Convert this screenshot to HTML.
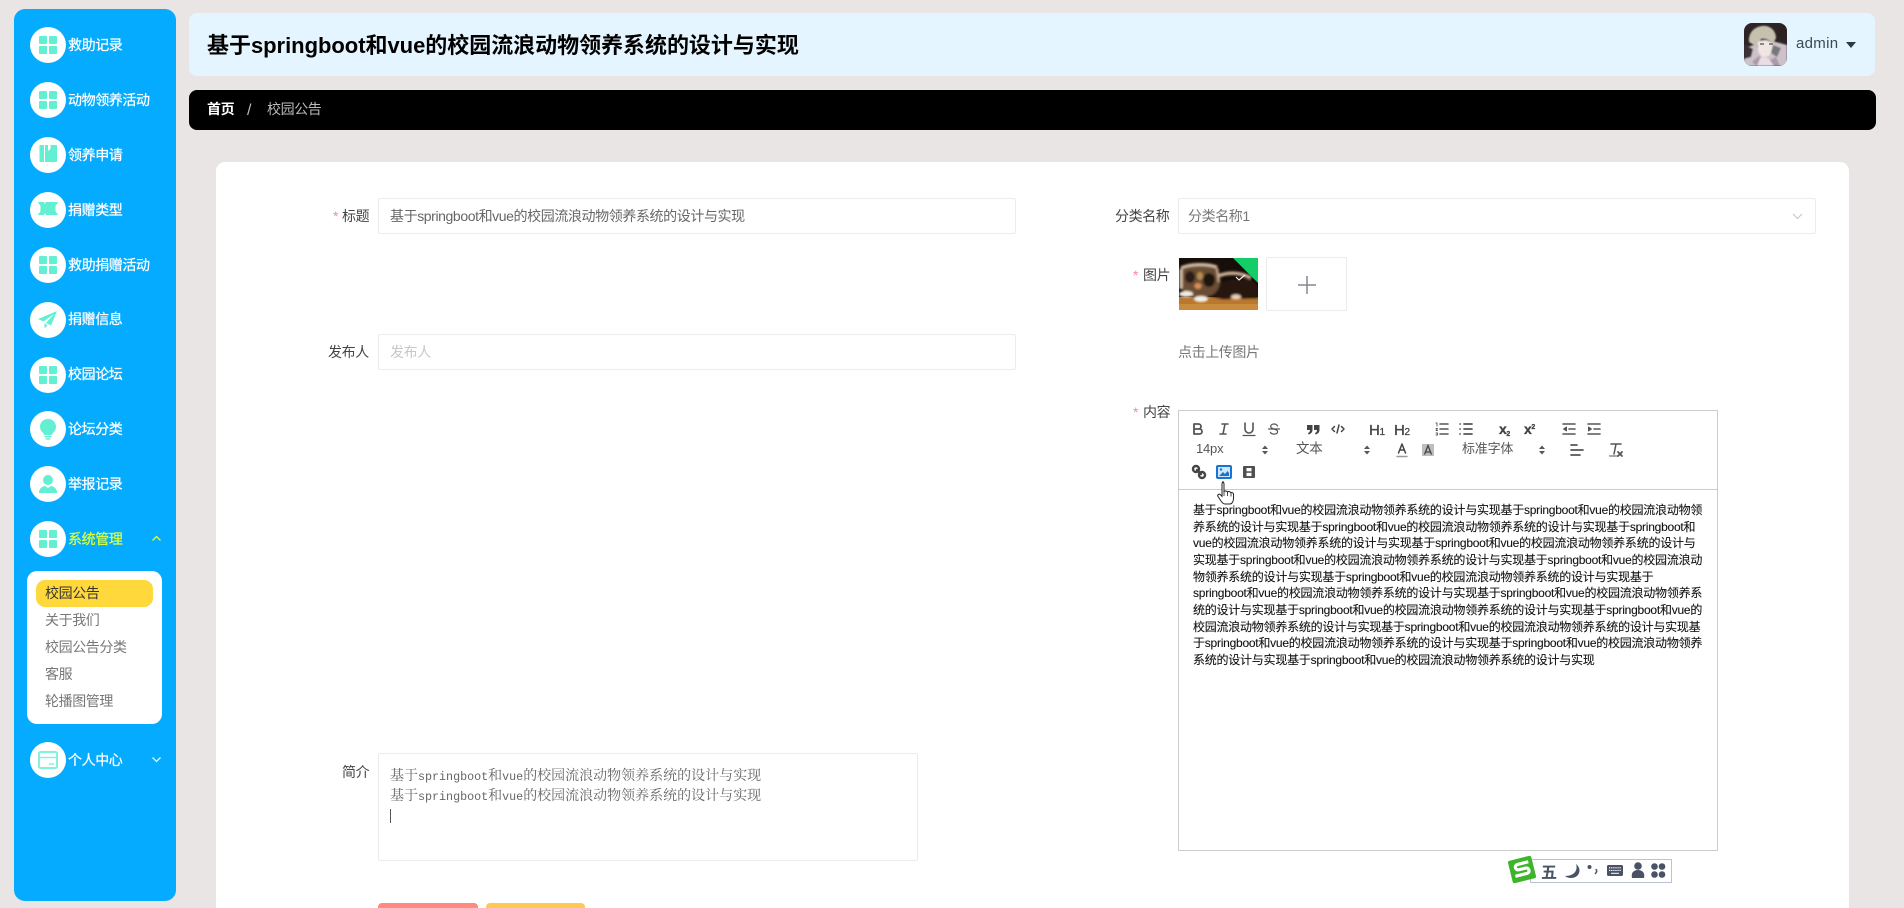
<!DOCTYPE html>
<html lang="zh">
<head>
<meta charset="utf-8">
<title>校园公告</title>
<style>
html,body{margin:0;padding:0;width:1904px;height:908px;overflow:hidden;background:#e9e5e5;}
body{position:relative;font-family:"Liberation Sans","Noto Sans CJK SC",sans-serif;font-size:14px;letter-spacing:-.4px;color:#333;}
div{box-sizing:border-box;}
.a{position:absolute;}
.t{position:absolute;white-space:nowrap;line-height:20px;}
.side{left:14px;top:9px;width:162px;height:892px;background:#05abff;border-radius:11px;}
.c{position:absolute;left:30px;width:36px;height:36px;border-radius:50%;background:#fff;}
.m{left:68px;color:#fff;-webkit-text-stroke:.25px currentColor;}
.sub{left:45px;color:#777;}
.lb{color:#444;text-align:right;}
.st{color:#f78a9a;}
.inp{position:absolute;border:1px solid #ececec;background:#fff;border-radius:2px;}
.ser{color:#666;font-family:'Noto Serif CJK SC','Liberation Mono',serif;letter-spacing:0;}
.ser span{font-family:'Liberation Mono',monospace;font-size:11.7px;letter-spacing:0;}
</style>
</head>
<body>
<!-- sidebar -->
<div class="a side"></div>
<div class="c" style="top:27px"></div>
<div class="c" style="top:82px"></div>
<div class="c" style="top:137px"></div>
<div class="c" style="top:192px"></div>
<div class="c" style="top:247px"></div>
<div class="c" style="top:302px"></div>
<div class="c" style="top:357px"></div>
<div class="c" style="top:411px"></div>
<div class="c" style="top:466px"></div>
<div class="c" style="top:521px"></div>
<div class="c" style="top:742px"></div>
<div class="t m" style="top:35px">救助记录</div>
<div class="t m" style="top:90px">动物领养活动</div>
<div class="t m" style="top:145px">领养申请</div>
<div class="t m" style="top:200px">捐赠类型</div>
<div class="t m" style="top:255px">救助捐赠活动</div>
<div class="t m" style="top:309px">捐赠信息</div>
<div class="t m" style="top:364px">校园论坛</div>
<div class="t m" style="top:419px">论坛分类</div>
<div class="t m" style="top:474px">举报记录</div>
<div class="t m" style="top:529px;color:#dcff3c">系统管理</div>
<div class="t m" style="top:750px">个人中心</div>
<div class="a" style="left:27px;top:571px;width:135px;height:153px;background:#fff;border-radius:10px"></div>
<div class="a" style="left:36px;top:580px;width:117px;height:27px;background:#ffd93b;border-radius:9px"></div>
<div class="t sub" style="top:583px;color:#333">校园公告</div>
<div class="t sub" style="top:610px">关于我们</div>
<div class="t sub" style="top:637px">校园公告分类</div>
<div class="t sub" style="top:664px">客服</div>
<div class="t sub" style="top:691px">轮播图管理</div>

<!-- header -->
<div class="a" style="left:189px;top:13px;width:1686px;height:63px;background:#e5f5ff;border-radius:8px"></div>
<div class="t" style="left:207px;top:31px;font-size:22px;line-height:30px;font-weight:bold;color:#000;letter-spacing:-.03px">基于springboot和vue的校园流浪动物领养系统的设计与实现</div>
<div class="t" style="left:1796px;top:34px;color:#3b4a57;font-size:15px;letter-spacing:.3px">admin</div>

<!-- breadcrumb -->
<div class="a" style="left:189px;top:90px;width:1687px;height:40px;background:#000;border-radius:8px"></div>
<div class="t" style="left:207px;top:99px;color:#fff;font-weight:bold">首页</div>
<div class="t" style="left:247px;top:101px;color:#bbb;font-size:16px">/</div>
<div class="t" style="left:267px;top:99px;color:#bbb">校园公告</div>

<!-- card -->
<div class="a" style="left:216px;top:162px;width:1633px;height:760px;background:#fff;border-radius:9px"></div>

<div class="t" style="left:333px;top:206px"><span class="st">*</span></div>
<div class="t lb" style="left:342px;top:206px">标题</div>
<div class="inp" style="left:378px;top:198px;width:638px;height:36px"></div>
<div class="t" style="left:390px;top:206px;color:#666">基于springboot和vue的校园流浪动物领养系统的设计与实现</div>

<div class="t lb" style="left:328px;top:342px">发布人</div>
<div class="inp" style="left:378px;top:334px;width:638px;height:36px"></div>
<div class="t" style="left:390px;top:342px;color:#c8c8c8">发布人</div>

<div class="t lb" style="left:342px;top:762px">简介</div>
<div class="inp" style="left:378px;top:753px;width:540px;height:108px"></div>
<div class="t ser" style="left:390px;top:765px">基于<span>springboot</span>和<span>vue</span>的校园流浪动物领养系统的设计与实现</div>
<div class="t ser" style="left:390px;top:785px">基于<span>springboot</span>和<span>vue</span>的校园流浪动物领养系统的设计与实现</div>
<div class="a" style="left:390px;top:809px;width:1px;height:14px;background:#555"></div>

<div class="a" style="left:378px;top:903px;width:100px;height:20px;background:#ff8a80;border-radius:4px"></div>
<div class="a" style="left:486px;top:903px;width:99px;height:20px;background:#fdcb52;border-radius:4px"></div>

<!-- right col -->
<div class="t lb" style="left:1115px;top:206px">分类名称</div>
<div class="inp" style="left:1178px;top:198px;width:638px;height:36px"></div>
<div class="t" style="left:1188px;top:206px;color:#777">分类名称1</div>

<div class="t" style="left:1133px;top:265px"><span class="st">*</span></div>
<div class="t lb" style="left:1143px;top:265px">图片</div>
<div class="inp" style="left:1266px;top:257px;width:81px;height:54px"></div>
<div class="t" style="left:1178px;top:342px;color:#777">点击上传图片</div>

<div class="t" style="left:1133px;top:402px"><span class="st">*</span></div>
<div class="t lb" style="left:1143px;top:402px">内容</div>
<div class="a" style="left:1178px;top:410px;width:540px;height:441px;border:1px solid #ccc;background:#fff"></div>
<div class="a" style="left:1179px;top:489px;width:538px;height:1px;background:#ccc"></div>

<div class="t" style="left:1196px;top:439px;font-size:13px;color:#555;letter-spacing:-.2px">14px</div>
<div class="t" style="left:1296px;top:439px;font-size:13.500px;color:#555;letter-spacing:-.2px">文本</div>
<div class="t" style="left:1462px;top:439px;font-size:13px;color:#555;letter-spacing:-.2px">标准字体</div>

<div class="a" style="left:1193px;top:502px;font-size:12px;line-height:16.67px;color:#111;white-space:nowrap;letter-spacing:-.24px;-webkit-text-stroke:.1px #111">基于springboot和vue的校园流浪动物领养系统的设计与实现基于springboot和vue的校园流浪动物领<br>养系统的设计与实现基于springboot和vue的校园流浪动物领养系统的设计与实现基于springboot和<br>vue的校园流浪动物领养系统的设计与实现基于springboot和vue的校园流浪动物领养系统的设计与<br>实现基于springboot和vue的校园流浪动物领养系统的设计与实现基于springboot和vue的校园流浪动<br>物领养系统的设计与实现基于springboot和vue的校园流浪动物领养系统的设计与实现基于<br>springboot和vue的校园流浪动物领养系统的设计与实现基于springboot和vue的校园流浪动物领养系<br>统的设计与实现基于springboot和vue的校园流浪动物领养系统的设计与实现基于springboot和vue的<br>校园流浪动物领养系统的设计与实现基于springboot和vue的校园流浪动物领养系统的设计与实现基<br>于springboot和vue的校园流浪动物领养系统的设计与实现基于springboot和vue的校园流浪动物领养<br>系统的设计与实现基于springboot和vue的校园流浪动物领养系统的设计与实现</div>

<!-- icon overlay -->
<svg class="a" style="left:0;top:0" width="1904" height="908" viewBox="0 0 1904 908" xmlns="http://www.w3.org/2000/svg">
<defs>
<g id="grid" fill="#62efd2"><rect x="-9" y="-9" width="8" height="8" rx="1"/><rect x="1" y="-9" width="8" height="8" rx="1"/><rect x="-9" y="1" width="8" height="8" rx="1"/><rect x="1" y="1" width="8" height="8" rx="1"/></g>
<g id="ud" fill="#555"><path d="M-3-1 0-4.500 3-1Z"/><path d="M-3 1 0 4.500 3 1Z"/></g>
<filter id="b1"><feGaussianBlur stdDeviation=".8"/></filter>
<filter id="b2"><feGaussianBlur stdDeviation="1.100"/></filter>
<clipPath id="catc"><rect x="1179" y="258" width="79" height="52"/></clipPath>
<clipPath id="avc"><rect x="1744" y="23" width="43" height="43" rx="8"/></clipPath>
</defs>
<use href="#grid" x="48" y="45"/>
<use href="#grid" x="48" y="100"/>
<use href="#grid" x="48" y="265"/>
<use href="#grid" x="48" y="375"/>
<use href="#grid" x="48" y="539"/>
<!-- book -->
<path d="M39.500 145h4.500v17h-4.500zM45 145h3v6l2.500-2v-4H57v17H45z" fill="#62efd2"/>
<!-- ticket -->
<path d="M38 202h6l1 2 1-2h12c-.5 2-2.500 2.500-2.500 4.500v4c0 2 2 2.500 2.500 4.500H46l-1-2-1 2h-6c.5-2 2.500-2.500 2.500-4.500v-4C40.500 204.500 38.500 204 38 202z" fill="#62efd2"/>
<!-- plane -->
<path d="M57 311 38 319l5.500 2.500L54 314l-8 9 5 2.500zM44.500 323v5.500l3-3z" fill="#62efd2"/>
<!-- bulb -->
<path d="M48 419c-4.700 0-8 3.500-8 7.800 0 3.200 2 5.200 3.500 6.600.6.600.7 1.100.7 1.600h7.600c0-.5.100-1 .7-1.600 1.500-1.400 3.500-3.400 3.500-6.600 0-4.300-3.300-7.800-8-7.800z" fill="#62efd2"/><rect x="44.500" y="436" width="7" height="1.500" rx=".7" fill="#62efd2"/><rect x="45.500" y="438.300" width="5" height="1.300" rx=".6" fill="#62efd2"/>
<!-- person -->
<circle cx="48" cy="480" r="5" fill="#62efd2"/><path d="M39 493c0-4 2.500-6.500 6-7l3 2 3-2c3.500.5 6 3 6 7z" fill="#62efd2"/>
<!-- card -->
<rect x="39" y="752" width="18" height="16" rx="1.500" fill="none" stroke="#82f2dc" stroke-width="2"/><path d="M39 757.500h18" stroke="#82f2dc" stroke-width="1.500"/><path d="M49 764h5" stroke="#82f2dc" stroke-width="1.500"/>
<!-- chevrons -->
<path d="M152.500 540.500 156.500 536.500 160.500 540.500" fill="none" stroke="#dcff3c" stroke-width="1.300"/>
<path d="M152.500 757.500 156.500 761.500 160.500 757.500" fill="none" stroke="#dff" stroke-width="1.300"/>

<!-- header avatar -->
<g clip-path="url(#avc)">
<rect x="1744" y="23" width="43" height="43" fill="#2e2425"/>
<g filter="url(#b1)">
<path d="M1744 48l10-3 10 6 8-10 15 4v21h-43z" fill="#cdc2cb"/>
<path d="M1749 42c-1-12 9-17 17-16 6 1 10 6 10 12l-3 6c-3-4-8-6-12-5l-4 8z" fill="#c5c1ae"/>
<path d="M1758 42c4-3 11-3 15 2l-2 9c-2 4-7 5-10 3-3-3-4-9-3-14z" fill="#efe5e2"/>
<path d="M1773 45l8 3-4 9-6-4z" fill="#77767b"/>
<path d="M1761 57l7 1 6 8h-18z" fill="#eaddE3"/>
<path d="M1744 44l9 5-2 8-7 2z" fill="#3a3034"/>
<path d="M1777 25h10v14l-7 3z" fill="#2a2021"/>
<path d="M1752 62c3-3 6-6 9-6l-4 10zM1770 60l6-3 4 9h-6z" fill="#a99aa5"/>
</g>
<path d="M1760 44h4M1769 44h4" stroke="#5c6b69" stroke-width="1.500"/>
</g>
<path d="M1846 42h10l-5 6z" fill="#2b3a45"/>

<!-- select chevron -->
<path d="M1793 214 1797.500 218.500 1802 214" fill="none" stroke="#c0c4cc" stroke-width="1"/>

<!-- kitten -->
<g clip-path="url(#catc)">
<rect x="1179" y="258" width="79" height="52" fill="#170d09"/>
<rect x="1179" y="297" width="79" height="13" fill="#b9772f"/>
<rect x="1179" y="304" width="79" height="6" fill="#c98c3e"/>
<g filter="url(#b2)">
<path d="M1210 296c4-12 18-18 32-17 10 1 16 4 16 10v9l-35 1z" fill="#26130b"/>
<path d="M1181 268c9-5 27-5 36-1l3 11c1 11-5 18-17 20-12 1-21-4-22-15z" fill="#6a4e36"/>
<path d="M1181 268c8-4 25-5 36-1" fill="none" stroke="#d6bfa6" stroke-width="3"/>
<path d="M1181 269v20" stroke="#d8c3ab" stroke-width="3"/>
<path d="M1217 268l2 14" stroke="#bfa48a" stroke-width="2.500"/>
<path d="M1218 276c10-4 22-4 33 2" fill="none" stroke="#cdaf94" stroke-width="3.500"/>
<ellipse cx="1190" cy="277" rx="5" ry="6" fill="#2a1d15"/>
<ellipse cx="1209" cy="280" rx="6" ry="7" fill="#1d120c"/>
<ellipse cx="1200" cy="276" rx="3" ry="4" fill="#b98c50"/>
<ellipse cx="1198" cy="286" rx="3.500" ry="3" fill="#d98f58"/>
<ellipse cx="1186" cy="294" rx="7" ry="3" fill="#f4ecdc"/>
<ellipse cx="1201" cy="299" rx="7" ry="3" fill="#f8f1e6"/>
<ellipse cx="1236" cy="297" rx="5" ry="2.500" fill="#e7d2ba"/>
</g>
<path d="M1233 258h25v25z" fill="#13ce66"/>
<path d="M1236 277l3 3 6-5" fill="none" stroke="#f2f2f2" stroke-width="1.200"/>
</g>
<!-- plus -->
<path d="M1298 285h18M1307 276v18" stroke="#84888e" stroke-width="1.500"/>

<!-- toolbar row 1 -->
<g fill="none" stroke="#555" stroke-width="1.800" stroke-linecap="round" stroke-linejoin="round">
<g transform="translate(1189 420)"><path d="M5 4h4.500a2.500 2.500 0 0 1 0 5H5zM5 9h5.500a2.500 2.500 0 0 1 0 5H5z"/></g>
<g transform="translate(1215 420)" stroke-width="1.600"><path d="M7 4h6M5 14h6M10 4 8 14"/></g>
<g transform="translate(1240 420)" stroke-width="1.600"><path d="M5 3v6a4 4 0 0 0 8 0V3"/><path d="M3 15.500h12" stroke-width="1.200"/></g>
<g transform="translate(1265 420)" stroke-width="1.200"><path d="M12.500 6C12 4.800 10.500 4 9 4c-2 0-3.300 1-3.300 2.400 0 1.200 1 2 3.300 2.600 2.700.7 3.600 1.600 3.600 2.800 0 1.400-1.500 2.300-3.600 2.300-1.600 0-3-.6-3.600-1.800"/><path d="M3.500 9h11"/></g>
<g transform="translate(1304 420)" stroke="none" fill="#444"><path d="M3 5h5.500v5c0 2-1.500 4-4 4.500L4 13c1.500-.5 2-1.500 2-3H3zM10 5h5.500v5c0 2-1.500 4-4 4.500L11 13c1.500-.5 2-1.500 2-3h-3z"/></g>
<g transform="translate(1329 420)" stroke-width="1.500" stroke="#444"><path d="M5.500 6.500 3 9l2.500 2.500M12.500 6.500 15 9l-2.500 2.500M10 5 8 13"/></g>
<g transform="translate(1433 420)" stroke-width="1.500"><path d="M7 4h8M7 9h8M7 14h8"/><path d="M3 3h1v3M3 8.500h1.500L3 10.500h1.500M3 13h1.500v2H3" stroke-width=".9"/></g>
<g transform="translate(1457 420)" stroke-width="1.700"><path d="M7 4h8M7 9h8M7 14h8"/><path d="M3 4h.1M3 9h.1M3 14h.1"/></g>
<g transform="translate(1560 420)" stroke-width="1.600"><path d="M3 4h12M9 9h6M3 14h12"/><path d="M6.500 7 3.500 9l3 2z" fill="#555" stroke-width="1"/></g>
<g transform="translate(1585 420)" stroke-width="1.600"><path d="M3 4h12M9 9h6M3 14h12"/><path d="M3.500 7l3 2-3 2z" fill="#555" stroke-width="1"/></g>
<!-- row 2 -->
<g transform="translate(1393 441)" stroke-width="1.500" stroke="#444"><path d="M5.500 12 9 3l3.500 9M6.700 9h4.600"/><path d="M4 15.500h10" stroke="#9a9a9a" stroke-width="1.400"/></g>
<g transform="translate(1568 441)" stroke-width="1.700"><path d="M3 4h6M3 9h12M3 14h9"/></g>
<g transform="translate(1606 440)" stroke-width="1.500"><path d="M5 4h10M10 4 8 14"/><path d="M3.500 16h8" stroke-width="1"/><path d="M12 12l4 4M16 12l-4 4" stroke-width="1.800"/></g>
<!-- row 3 link -->
<g transform="translate(1190 463)" stroke-width="2.400" stroke="#444"><path d="M7 7l4 4"/><circle cx="6" cy="6" r="3"/><circle cx="12" cy="12" r="3"/></g>
</g>
<g fill="#444" stroke="#444" stroke-width=".3" font-family="Liberation Sans, sans-serif">
<text x="1369" y="435" font-size="15">H<tspan font-size="10">1</tspan></text>
<text x="1394" y="435" font-size="15">H<tspan font-size="10">2</tspan></text>
<text x="1499" y="434" font-size="14" font-weight="bold">x<tspan font-size="7" dy="2">2</tspan></text>
<text x="1524" y="434" font-size="14" font-weight="bold">x<tspan font-size="7" dy="-5">2</tspan></text>
</g>
<!-- film -->
<rect x="1243" y="466" width="12" height="12" rx="1" fill="#505050"/>
<rect x="1246.500" y="468" width="5" height="3.300" fill="#fff"/>
<rect x="1246.500" y="472.800" width="5" height="3.300" fill="#fff"/>
<use href="#ud" x="1265" y="450"/>
<use href="#ud" x="1367" y="450"/>
<use href="#ud" x="1542" y="450"/>
<!-- A background -->
<rect x="1422" y="444" width="12" height="12" fill="#bdbdbd"/>
<path d="M1424.500 454.500 1428 445.500l3.500 9M1425.800 452h4.400" fill="none" stroke="#444" stroke-width="1.300"/>
<!-- image icon (active) -->
<g transform="translate(1215 463)">
<rect x="2" y="3" width="14" height="12" rx="1" fill="#cfe6fa" stroke="#1a73cc" stroke-width="2"/>
<path d="M4 13l4-4 2 2 2.500-3L14 10v3z" fill="#1a73cc"/>
<circle cx="6" cy="6.500" r="1.200" fill="#1a73cc"/>
</g>
<!-- hand cursor -->
<path d="M1222 482c1.300 0 2 .8 2 2v7.500c.8-.7 3-.8 3.500.5.800-.8 3-.6 3.400.8 1-.6 2.600 0 2.600 1.500v4c0 3-1.500 5.700-3.500 5.700h-5c-2 0-3-1.500-4-3l-3-4.500c-1-1.500.8-3 2.200-2l1.800 1.800V484c0-1.200.7-2 2-2z" fill="#fff" stroke="#222" stroke-width="1"/>
<path d="M1224 491.500V496M1227.500 492v4M1231 493v3.500" stroke="#222" stroke-width=".8"/>

<!-- IME bar -->
<rect x="1530.500" y="859.500" width="141" height="23" fill="#fff" stroke="#bcc2d2"/>
<g transform="rotate(-14 1522 869.500)">
<rect x="1510" y="858" width="24" height="23" rx="2" fill="#3db52a"/>
<path d="M1530 863.500h-11c-4 0-4 5.500 0 5.500h7c3.500 0 3.500 5.500 0 5.500h-12" fill="none" stroke="#fff" stroke-width="3.200"/>
</g>
<text x="1541" y="878" font-size="16" font-weight="bold" fill="#4a5266" font-family="Noto Sans CJK SC, sans-serif">五</text>
<path d="M1576 864c2 5.500-1 12-11 12 3 2.800 9 2.500 12 0s4-8-1-12z" fill="#4a5266"/>
<circle cx="1589.500" cy="867" r="2" fill="#4a5266"/><path d="M1595.500 869.500c1.500 0 1.500 2 .5 3.300l-1 1" stroke="#4a5266" stroke-width="1.500" fill="none"/>
<rect x="1607" y="865" width="16" height="11" rx="1.500" fill="#4a5266"/>
<path d="M1609 867.800h12M1609 870.400h12" stroke="#fff" stroke-width="1.100" stroke-dasharray="1.300 .8"/><path d="M1611 873.300h8" stroke="#fff" stroke-width="1"/>
<circle cx="1638" cy="866" r="3.800" fill="#4a5266"/><path d="M1632 878c-1.200-5.500 1.800-8 6-8s7.200 2.500 6 8z" fill="#4a5266"/>
<g fill="#4a5266"><circle cx="1654.500" cy="866.500" r="3.300"/><circle cx="1662" cy="866.500" r="3.300"/><circle cx="1654.500" cy="874.500" r="3.300"/><circle cx="1662" cy="874.500" r="3.300"/></g>
</svg>
</body>
</html>
